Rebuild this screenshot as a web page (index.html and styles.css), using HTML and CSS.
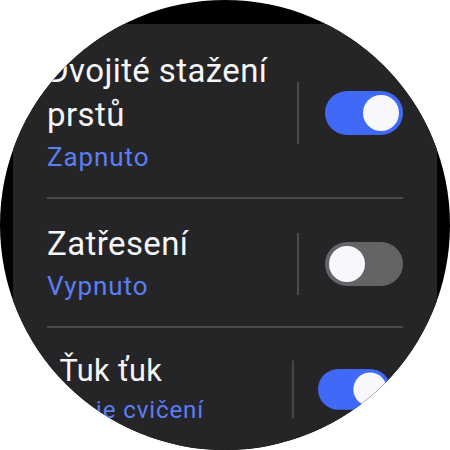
FILE: index.html
```html
<!DOCTYPE html>
<html>
<head>
    <title>Gesta</title>
    <link rel="stylesheet" href="styles.css">
</head>
<body>
    <div class="watch">
        <div class="screen">
            <div class="item">
                <div class="text">
                    <div class="title">Dvojité stažení prstů</div>
                    <div class="subtitle">Zapnuto</div>
                </div>
                <div class="vline"></div>
                <div class="toggle on"><div class="knob"></div></div>
            </div>
            <div class="item">
                <div class="text">
                    <div class="title">Zatřesení</div>
                    <div class="subtitle">Vypnuto</div>
                </div>
                <div class="vline"></div>
                <div class="toggle"><div class="knob"></div></div>
            </div>
            <div class="item small">
                <div class="text">
                    <div class="title">Ťuk ťuk</div>
                    <div class="subtitle">Moje cvičení</div>
                </div>
                <div class="vline"></div>
                <div class="toggle on"><div class="knob"></div></div>
            </div>
        </div>
    </div>
</body>
</html>
```

FILE: styles.css
```css
body {
    margin: 0;
    background-color: #fff;
    font-family: Roboto, 'Noto Sans', sans-serif;
}
.watch {
    width: 450px;
    height: 450px;
    border-radius: 50%;
    overflow: hidden;
    background-color: #000;
}
.screen {
    margin: 24px 13px 0;
    height: 426px;
    padding: 2px 34px 0;
    box-sizing: border-box;
    background-color: #252527;
}
.item {
    display: flex;
    align-items: center;
    padding: 23px 0 20px;
    border-bottom: 2px solid #4a4a4c;
}
.item.small {
    transform: scale(0.93);
    transform-origin: 50% 10%;
    border-bottom: none;
}
.text {
    flex: 1;
    padding-right: 20px;
}
.title {
    color: #f6f6f8;
    font-size: 33px;
    line-height: 44px;
    letter-spacing: 0.4px;
}
.subtitle {
    color: #5b7ef4;
    font-size: 26px;
    line-height: 40px;
    letter-spacing: 0.9px;
}
.vline {
    width: 2px;
    height: 62px;
    background-color: #4a4a4c;
}
.toggle {
    width: 78px;
    height: 44px;
    margin-left: 26px;
    padding: 4px;
    box-sizing: border-box;
    border-radius: 22px;
    background-color: #646467;
    display: flex;
}
.toggle.on {
    background-color: #3f69f6;
    justify-content: flex-end;
}
.knob {
    width: 36px;
    height: 36px;
    border-radius: 50%;
    background-color: #f8f8fc;
}
```
